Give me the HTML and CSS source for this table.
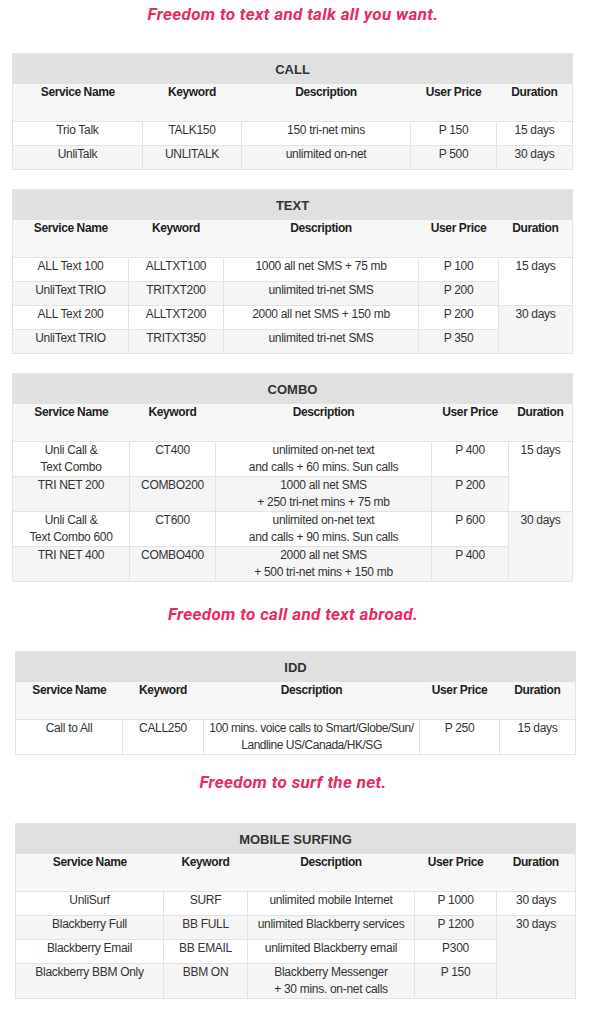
FILE: index.html
```html
<!DOCTYPE html>
<html>
<head>
<meta charset="utf-8">
<link rel="stylesheet" href="styles.css">
</head>
<body>
<div class="page">
  <h2 class="promo promo-first">Freedom to text and talk all you want.</h2>

  <table class="plans call">
    <colgroup><col><col><col><col><col></colgroup>
    <tr class="title"><th colspan="5">CALL</th></tr>
    <tr class="head"><th>Service Name</th><th>Keyword</th><th>Description</th><th>User Price</th><th>Duration</th></tr>
    <tr><td>Trio Talk</td><td>TALK150</td><td>150 tri-net mins</td><td>P 150</td><td>15 days</td></tr>
    <tr class="alt"><td>UnliTalk</td><td>UNLITALK</td><td>unlimited on-net</td><td>P 500</td><td>30 days</td></tr>
  </table>

  <table class="plans text">
    <colgroup><col><col><col><col><col></colgroup>
    <tr class="title"><th colspan="5">TEXT</th></tr>
    <tr class="head"><th>Service Name</th><th>Keyword</th><th>Description</th><th>User Price</th><th>Duration</th></tr>
    <tr><td>ALL Text 100</td><td>ALLTXT100</td><td>1000 all net SMS + 75 mb</td><td>P 100</td><td rowspan="2" class="span-white">15 days</td></tr>
    <tr class="alt"><td>UnliText TRIO</td><td>TRITXT200</td><td>unlimited tri-net SMS</td><td>P 200</td></tr>
    <tr><td>ALL Text 200</td><td>ALLTXT200</td><td>2000 all net SMS + 150 mb</td><td>P 200</td><td rowspan="2" class="span-grey">30 days</td></tr>
    <tr class="alt"><td>UnliText TRIO</td><td>TRITXT350</td><td>unlimited tri-net SMS</td><td>P 350</td></tr>
  </table>

  <table class="plans combo">
    <colgroup><col><col><col><col><col></colgroup>
    <tr class="title"><th colspan="5">COMBO</th></tr>
    <tr class="head"><th>Service Name</th><th>Keyword</th><th>Description</th><th>User Price</th><th>Duration</th></tr>
    <tr class="tall"><td>Unli Call &amp;<br>Text Combo</td><td>CT400</td><td>unlimited on-net text<br>and calls + 60 mins. Sun calls</td><td>P 400</td><td rowspan="2" class="span-white">15 days</td></tr>
    <tr class="alt tall"><td>TRI NET 200</td><td>COMBO200</td><td>1000 all net SMS<br>+ 250 tri-net mins + 75 mb</td><td>P 200</td></tr>
    <tr class="tall"><td>Unli Call &amp;<br>Text Combo 600</td><td>CT600</td><td>unlimited on-net text<br>and calls + 90 mins. Sun calls</td><td>P 600</td><td rowspan="2" class="span-grey">30 days</td></tr>
    <tr class="alt tall"><td>TRI NET 400</td><td>COMBO400</td><td>2000 all net SMS<br>+ 500 tri-net mins + 150 mb</td><td>P 400</td></tr>
  </table>

  <h2 class="promo promo-second">Freedom to call and text abroad.</h2>

  <table class="plans idd shifted">
    <colgroup><col><col><col><col><col></colgroup>
    <tr class="title"><th colspan="5">IDD</th></tr>
    <tr class="head"><th>Service Name</th><th>Keyword</th><th>Description</th><th>User Price</th><th>Duration</th></tr>
    <tr class="tall"><td>Call to All</td><td>CALL250</td><td class="tight">100 mins. voice calls to Smart/Globe/Sun/<br>Landline US/Canada/HK/SG</td><td>P 250</td><td>15 days</td></tr>
  </table>

  <h2 class="promo promo-third">Freedom to surf the net.</h2>

  <table class="plans surf shifted">
    <colgroup><col><col><col><col><col></colgroup>
    <tr class="title"><th colspan="5">MOBILE SURFING</th></tr>
    <tr class="head"><th>Service Name</th><th>Keyword</th><th>Description</th><th>User Price</th><th>Duration</th></tr>
    <tr><td>UnliSurf</td><td>SURF</td><td>unlimited mobile Internet</td><td>P 1000</td><td>30 days</td></tr>
    <tr class="alt"><td>Blackberry Full</td><td>BB FULL</td><td>unlimited Blackberry services</td><td>P 1200</td><td rowspan="3" class="span-grey">30 days</td></tr>
    <tr><td>Blackberry Email</td><td>BB EMAIL</td><td>unlimited Blackberry email</td><td>P300</td></tr>
    <tr class="alt tall"><td>Blackberry BBM Only</td><td>BBM ON</td><td>Blackberry Messenger<br>+ 30 mins. on-net calls</td><td>P 150</td></tr>
  </table>
</div>
</body>
</html>
```

FILE: styles.css
```css
html, body {
  margin: 0;
  padding: 0;
  background: #ffffff;
}

.page {
  width: 562px;
  margin-left: 12px;
  padding-top: 2px;
  padding-bottom: 20px;
  font-family: "Liberation Sans", Arial, sans-serif;
  color: #333333;
}

.promo {
  margin: 0;
  height: 24px;
  line-height: 24px;
  text-align: center;
  font-family: Roboto, "Noto Sans", sans-serif;
  font-style: italic;
  font-weight: 700;
  font-size: 17px;
  letter-spacing: 0.35px;
  color: #ea2a5e;
}

.promo-first { margin-bottom: 27px; }
.promo-second { margin-top: 20px; margin-bottom: 25px; }
.promo-third { margin-top: 15px; margin-bottom: 29px; }

.plans {
  width: 560px;
  table-layout: fixed;
  border-collapse: collapse;
  border: 1px solid #e3e3e3;
  margin-bottom: 19px;
  font-size: 12px;
  letter-spacing: -0.3px;
}

.plans.shifted {
  margin-left: 3px;
  margin-bottom: 0;
}

.plans th,
.plans td {
  padding: 0 2px;
  text-align: center;
  vertical-align: top;
  line-height: 17px;
  white-space: nowrap;
}

.plans td {
  border: 1px solid #e3e3e3;
}

.plans .title th {
  height: 30px;
  padding: 0;
  vertical-align: middle;
  background: #e0e0e0;
  font-size: 13px;
  font-weight: 700;
  letter-spacing: 0;
  color: #333333;
}

.plans .head th {
  height: 37px;
  background: #f7f7f7;
  font-weight: 700;
  letter-spacing: -0.4px;
  color: #222222;
}

.plans tr {
  height: 24px;
  background: #ffffff;
}

.plans tr.alt { background: #f5f5f5; }
.plans tr.tall { height: 34px; }

.plans td.span-white { background: #ffffff; }
.plans td.span-grey { background: #f5f5f5; }

.plans td.tight {
  padding: 0;
  letter-spacing: -0.45px;
}

/* column widths */
.call col:nth-child(1) { width: 130px; }
.call col:nth-child(2) { width: 99px; }
.call col:nth-child(3) { width: 169px; }
.call col:nth-child(4) { width: 86px; }
.call col:nth-child(5) { width: 76px; }

.text col:nth-child(1) { width: 116px; }
.text col:nth-child(2) { width: 95px; }
.text col:nth-child(3) { width: 195px; }
.text col:nth-child(4) { width: 80px; }
.text col:nth-child(5) { width: 74px; }

.combo col:nth-child(1) { width: 117px; }
.combo col:nth-child(2) { width: 86px; }
.combo col:nth-child(3) { width: 216px; }
.combo col:nth-child(4) { width: 77px; }
.combo col:nth-child(5) { width: 64px; }

.idd col:nth-child(1) { width: 107px; }
.idd col:nth-child(2) { width: 81px; }
.idd col:nth-child(3) { width: 216px; }
.idd col:nth-child(4) { width: 80px; }
.idd col:nth-child(5) { width: 76px; }

.surf col:nth-child(1) { width: 148px; }
.surf col:nth-child(2) { width: 84px; }
.surf col:nth-child(3) { width: 167px; }
.surf col:nth-child(4) { width: 82px; }
.surf col:nth-child(5) { width: 79px; }
```
